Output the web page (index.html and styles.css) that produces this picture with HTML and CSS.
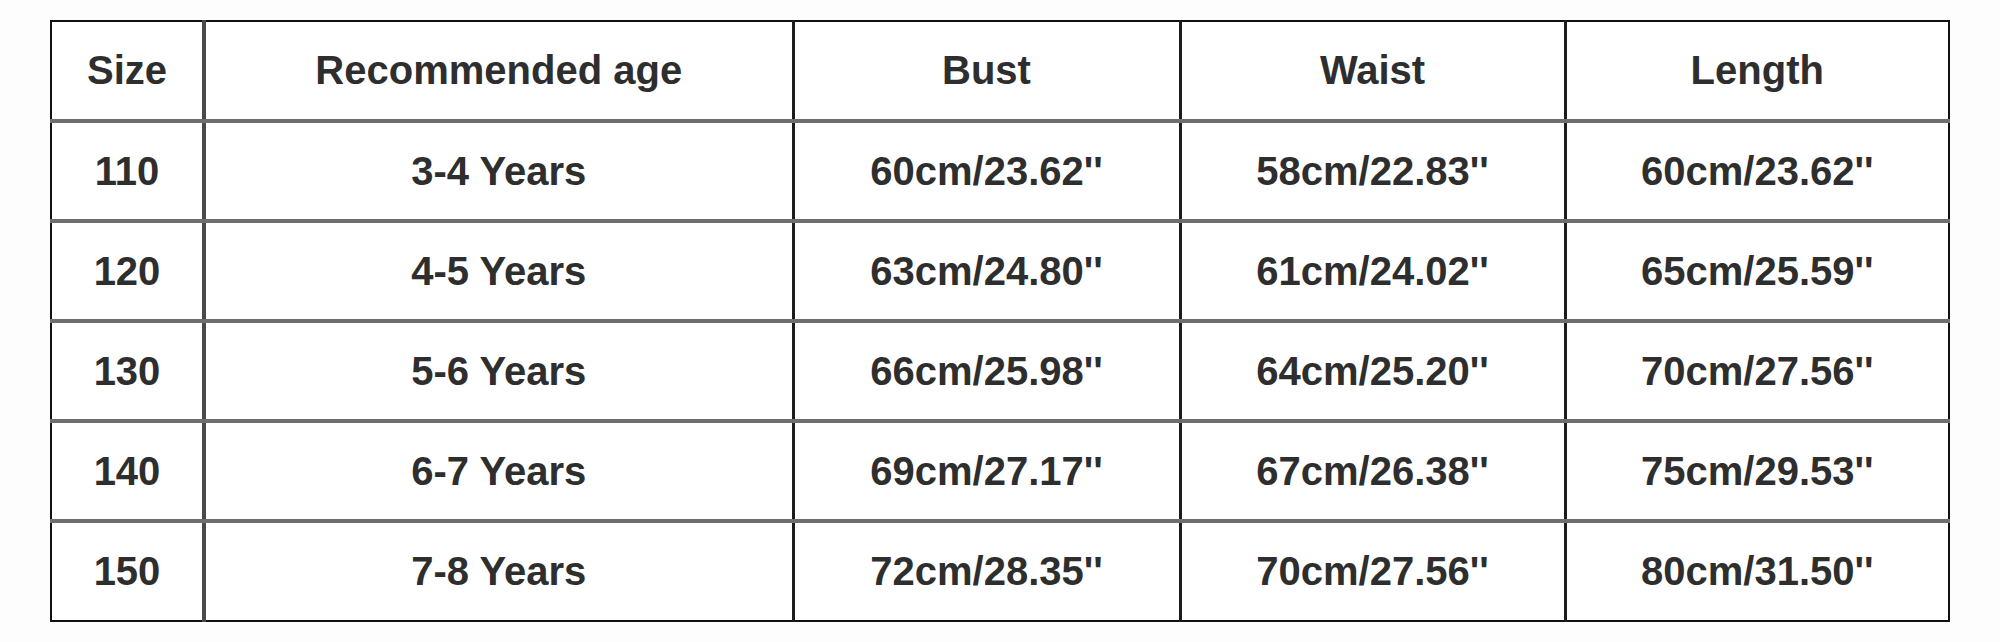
FILE: index.html
```html
<!DOCTYPE html>
<html lang="en">
<head>
<meta charset="utf-8">
<title>Size chart</title>
<link rel="stylesheet" href="styles.css">
</head>
<body>
<main class="page">
  <table class="size-chart">
    <colgroup>
      <col class="c-size">
      <col class="c-age">
      <col class="c-bust">
      <col class="c-waist">
      <col class="c-length">
    </colgroup>
    <thead>
      <tr><th>Size</th><th>Recommended age</th><th>Bust</th><th>Waist</th><th>Length</th></tr>
    </thead>
    <tbody>
      <tr><td>110</td><td>3-4 Years</td><td>60cm/23.62''</td><td>58cm/22.83''</td><td>60cm/23.62''</td></tr>
      <tr><td>120</td><td>4-5 Years</td><td>63cm/24.80''</td><td>61cm/24.02''</td><td>65cm/25.59''</td></tr>
      <tr><td>130</td><td>5-6 Years</td><td>66cm/25.98''</td><td>64cm/25.20''</td><td>70cm/27.56''</td></tr>
      <tr><td>140</td><td>6-7 Years</td><td>69cm/27.17''</td><td>67cm/26.38''</td><td>75cm/29.53''</td></tr>
      <tr><td>150</td><td>7-8 Years</td><td>72cm/28.35''</td><td>70cm/27.56''</td><td>80cm/31.50''</td></tr>
    </tbody>
  </table>
</main>
</body>
</html>
```

FILE: styles.css
```css
html, body {
  margin: 0;
  background: #fdfdfd;
}
.page {
  padding: 20px 0 0 50px;
}
.size-chart {
  border-collapse: collapse;
  table-layout: fixed;
  width: 1900px;
  background: #ffffff;
  border: 2px solid #111111;
  font-family: "Liberation Sans", Arial, sans-serif;
  font-weight: bold;
  font-size: 40px;
  color: #2e2e2e;
}
.c-size { width: 153px; }
.c-age { width: 589px; }
.c-bust { width: 387px; }
.c-waist { width: 385px; }
.c-length { width: 384px; }
.size-chart tr {
  height: 100px;
}
.size-chart th,
.size-chart td {
  padding: 0;
  text-align: center;
  vertical-align: middle;
  font-weight: bold;
  border-left: 3px solid #1c1c1c;
  border-right: 3px solid #1c1c1c;
  border-top: 4px solid #6e6e6e;
  border-bottom: 4px solid #6e6e6e;
}
.size-chart th:first-child,
.size-chart td:first-child {
  border-left: 2px solid #111111;
  border-right: 4px solid #4a4a4a;
}
.size-chart th:last-child,
.size-chart td:last-child {
  border-right: 2px solid #111111;
}
.size-chart thead th {
  border-top: 2px solid #111111;
}
.size-chart tbody tr:last-child td {
  border-bottom: 2px solid #111111;
}
```
